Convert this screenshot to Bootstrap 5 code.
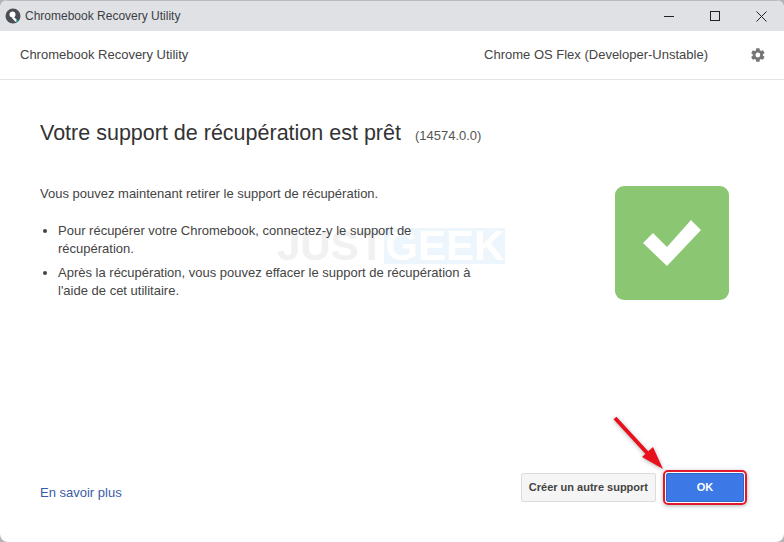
<!DOCTYPE html>
<html lang="fr">

<head>
  <meta charset="UTF-8">
  <title>Chromebook Recovery Utility</title>
  <link href="https://cdn.jsdelivr.net/npm/bootstrap@5.3.0/dist/css/bootstrap.min.css" rel="stylesheet">
  <style>
    html, body { height: 100%; }
    body { background: #b4b4b6; font-family: "Liberation Sans", sans-serif; color: #333; overflow: hidden; }
    .app-window { position: relative; width: 784px; height: 542px; background: #fff; border-radius: 8px; overflow: hidden; }
    .title-bar { height: 31px; background: #dfe1e5; border-top: 1px solid #b9b9bb; padding-left: 5px; font-size: 12px; color: #3c4043; }
    .win-btn { width: 46px; height: 30px; }
    .app-head { height: 49px; border-bottom: 1px solid #e4e4e4; padding: 0 18px 0 20px; font-size: 13px; color: #444; }
    .app-body { position: relative; z-index: 1; padding: 41px 40px 0; height: 462px; }
    .big-title { font-size: 21.5px; font-weight: 400; line-height: 24px; color: #333; margin: 0; }
    .big-title small { font-size: 13px; color: #555; margin-left: 8px; }
    .intro-row { margin-top: 37px; }
    .msg-col { width: 433px; font-size: 13px; line-height: 18px; color: #444; }
    .msg-col ul { padding-left: 18px; margin: 19px 0 0; }
    .msg-col li { margin-bottom: 6px; }
    .ok-tile { width: 114px; height: 114px; background: #8bc672; border-radius: 9px; margin: 1px 15px 0 0; }
    .more-link { color: #3a5ba8; font-size: 13px; text-decoration: none; margin-top: 10px; }
    .btn-other { height: 29px; padding: 0 7px; font-size: 11px; font-weight: 700; color: #444; background: #f5f5f5; border: 1px solid #dcdcdc; border-radius: 2px; }
    .btn-ok { width: 78px; height: 29px; padding: 0; font-size: 11px; font-weight: 700; color: #fff; background: #3c78e6; border: 1px solid #2f66cc; border-radius: 2px; }
    .ok-frame { border: 2px solid #e2192c; border-radius: 5px; padding: 1px; box-shadow: 0 1px 4px rgba(0, 0, 0, .3); margin: 0 -3px 0 7px; }
    .foot-row { position: absolute; z-index: 1; left: 40px; right: 40px; top: 473px; height: 29px; }
    .mark-text { position: absolute; left: 277px; top: 228px; font: 700 42px/36px "Liberation Sans", sans-serif; }
    .mark-text .just { color: #f1f1f1; }
    .mark-text .geek { display: inline-block; color: #fff; background: #edf6fc; padding: 0 1px; }
    .red-arrow { position: absolute; z-index: 2; left: 606px; top: 410px; filter: drop-shadow(0 1px 2px rgba(0, 0, 0, .3)); }
  </style>
</head>

<body>
  <div class="app-window">
    <div class="title-bar d-flex align-items-center">
      <svg width="16" height="16" viewBox="0 0 16 16" class="me-1">
        <circle cx="8" cy="8" r="7.500" fill="#4a4f55"/>
        <circle cx="7.500" cy="6.500" r="3" fill="#fff"/>
        <path d="M8 8l4 4-1.500 2-3.500-4z" fill="#fff"/>
        <path d="M11 11.500l2 1.500-2 1.500z" fill="#35c4c0"/>
      </svg>
      <span class="flex-grow-1">Chromebook Recovery Utility</span>
      <div class="win-btn d-flex align-items-center justify-content-center">
        <svg width="10" height="10"><path d="M0 5.500h10" stroke="#222" fill="none"/></svg>
      </div>
      <div class="win-btn d-flex align-items-center justify-content-center">
        <svg width="10" height="10"><rect x=".5" y=".5" width="9" height="9" stroke="#222" fill="none"/></svg>
      </div>
      <div class="win-btn d-flex align-items-center justify-content-center">
        <svg width="11" height="11"><path d="M.5.500l10 10M10.500.500l-10 10" stroke="#222" fill="none"/></svg>
      </div>
    </div>

    <div class="app-head d-flex align-items-center justify-content-between">
      <span>Chromebook Recovery Utility</span>
      <div class="d-flex align-items-center">
        <span>Chrome OS Flex (Developer-Unstable)</span>
        <svg style="margin-left:42px" width="16" height="16" viewBox="0 0 24 24">
          <path fill="#757575" d="M19.400 13c.04-.32.06-.66.06-1s-.02-.68-.07-1l2.160-1.680c.2-.15.25-.43.13-.65l-2.050-3.550c-.12-.22-.39-.3-.62-.22l-2.550 1.020c-.53-.4-1.100-.74-1.730-1l-.38-2.710A.5.500 0 0 0 13.850 2h-4.100c-.25 0-.46.18-.5.420l-.38 2.710c-.63.26-1.200.6-1.730 1L4.590 5.110c-.23-.08-.5 0-.62.22L1.920 8.880c-.13.220-.08.5.13.650L4.210 11c-.05.32-.09.67-.09 1s.02.68.07 1l-2.160 1.680c-.2.15-.25.43-.13.65l2.050 3.550c.12.22.39.3.62.22l2.550-1.020c.53.4 1.100.74 1.730 1l.38 2.710c.04.24.25.42.5.42h4.100c.25 0 .46-.18.5-.42l.38-2.710c.63-.26 1.200-.6 1.730-1l2.550 1.020c.23.08.5 0 .62-.22l2.050-3.550c.12-.22.07-.5-.13-.65L19.400 13zM11.800 15.600a3.600 3.600 0 1 1 0-7.200 3.600 3.600 0 0 1 0 7.200z"/>
        </svg>
      </div>
    </div>

    <div class="app-body">
      <h1 class="big-title">Votre support de récupération est prêt <small>(14574.0.0)</small></h1>
      <div class="intro-row d-flex justify-content-between align-items-start">
        <div class="msg-col">
          <div>Vous pouvez maintenant retirer le support de récupération.</div>
          <ul>
            <li>Pour récupérer votre Chromebook, connectez-y le support de récupération.</li>
            <li>Après la récupération, vous pouvez effacer le support de récupération à l'aide de cet utilitaire.</li>
          </ul>
        </div>
        <div class="ok-tile d-flex align-items-center justify-content-center">
          <svg width="60" height="48" viewBox="0 0 60 48"><path d="M1 24l10-10 14 14L49 1l10 10-34 36z" fill="#fff"/></svg>
        </div>
      </div>
    </div>

    <div class="foot-row d-flex align-items-center justify-content-between">
      <a href="#" class="more-link">En savoir plus</a>
      <div class="d-flex align-items-center">
        <button type="button" class="btn btn-other">Créer un autre support</button>
        <div class="ok-frame"><button type="button" class="btn btn-ok">OK</button></div>
      </div>
    </div>

    <div class="mark-text"><span class="just">JUST</span><span class="geek">GEEK</span></div>
    <svg class="red-arrow" width="62" height="64" viewBox="0 0 62 64">
      <path d="M9 8L43 45" stroke="#e8101c" stroke-width="4" fill="none"/>
      <path d="M57 59L36 47l11-10z" fill="#e8101c"/>
    </svg>
  </div>
</body>

</html>
